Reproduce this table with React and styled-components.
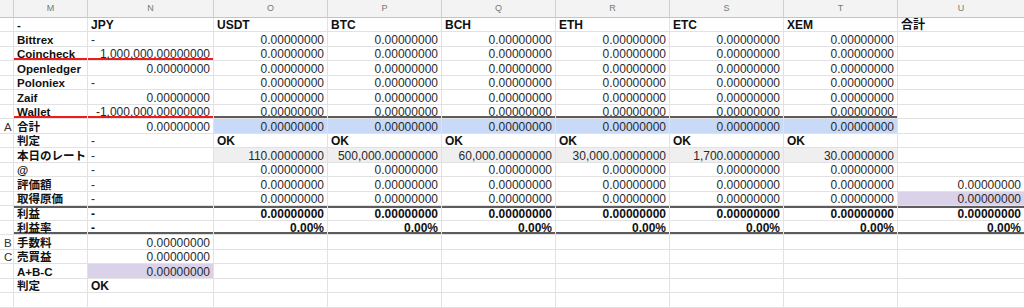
import React from "react";
import styled, { createGlobalStyle } from "styled-components";

const GlobalStyle = createGlobalStyle`
  html, body {
    margin: 0;
    padding: 0;
    background: #ffffff;
  }
  body {
    font-family: "Liberation Sans", Arial, "Noto Sans CJK JP", sans-serif;
  }
`;

const Viewport = styled.div`
  width: 1024px;
  height: 308px;
  overflow: hidden;
  background: #ffffff;
`;

const Sheet = styled.div`
  display: grid;
  grid-template-columns: 14px 74px 126px repeat(6, 114px) 127px;
  grid-template-rows: 17.5px;
  grid-auto-rows: 14.5px;
  width: 1025px;
`;

const HeaderCell = styled.div`
  box-sizing: border-box;
  background: #f3f3f3;
  border-right: 1px solid #d0d0d0;
  border-bottom: 1px solid #c4c4c4;
  color: #777;
  font-size: 9px;
  line-height: 16px;
  text-align: center;
`;

const Cell = styled.div`
  box-sizing: border-box;
  border-right: 1px solid #e2e2e2;
  border-bottom: 1px solid #e2e2e2;
  background: ${(p) => p.$bg || "#ffffff"};
  box-shadow: ${(p) =>
    [
      p.$top && `inset 0 2px 0 ${p.$top}`,
      p.$under && `inset 0 -2px 0 ${p.$under}`,
    ]
      .filter(Boolean)
      .join(", ") || "none"};
  padding: 1.5px 3px 0;
  font-size: ${(p) => (p.$label ? "11.5px" : "12px")};
  font-weight: ${(p) => (p.$bold ? 700 : 400)};
  color: ${(p) => (p.$bold ? "#111" : "#2a2a2a")};
  line-height: 13px;
  text-align: ${(p) => p.$align || "left"};
  white-space: nowrap;
`;

const Marker = styled(Cell)`
  padding-left: 4px;
  padding-right: 0;
  color: #333;
  font-size: 11.5px;
`;

const ZERO = "0.00000000";
const DARK = "#5c5c5c";
const RED = "#ee1c1c";
const BLUE = "#c9daf8";
const GREY = "#efefef";
const PURPLE = "#d9d2e9";

const letters = ["", "M", "N", "O", "P", "Q", "R", "S", "T", "U"];
const coins = ["USDT", "BTC", "BCH", "ETH", "ETC", "XEM"];
const rates = [
  "110.00000000",
  "500,000.00000000",
  "60,000.00000000",
  "30,000.00000000",
  "1,700.00000000",
  "30.00000000",
];

const num = (v, extra = {}) => ({ v, align: "right", ...extra });
const dash = (extra = {}) => ({ v: "-", ...extra });
const six = (fn) => coins.map((_, i) => fn(i));

const exchange = (name, jpy, under) => ({
  label: name,
  under,
  n: jpy === "-" ? dash() : num(jpy),
  coins: six(() => num(ZERO)),
  coinUnder: name === "Wallet" ? DARK : null,
});

const rows = [
  {
    label: "-",
    n: { v: "JPY", bold: true },
    coins: coins.map((c) => ({ v: c, bold: true })),
    u: { v: "合計", bold: true },
  },
  exchange("Bittrex", "-"),
  exchange("Coincheck", "1,000,000.00000000", RED),
  exchange("Openledger", ZERO),
  exchange("Poloniex", "-"),
  exchange("Zaif", ZERO),
  exchange("Wallet", "-1,000,000.00000000", RED),
  {
    marker: "A",
    label: "合計",
    n: num(ZERO),
    coins: six(() => num(ZERO, { bg: BLUE })),
  },
  {
    label: "判定",
    n: dash(),
    coins: six(() => ({ v: "OK", bold: true })),
  },
  {
    label: "本日のレート",
    n: dash(),
    coins: six((i) => num(rates[i], { bg: GREY })),
  },
  { label: "@", n: dash(), coins: six(() => num(ZERO)) },
  { label: "評価額", n: dash(), coins: six(() => num(ZERO)), u: num(ZERO) },
  {
    label: "取得原価",
    n: dash(),
    coins: six(() => num(ZERO)),
    u: num(ZERO, { bg: PURPLE }),
  },
  {
    label: "利益",
    top: DARK,
    n: dash({ bold: true }),
    coins: six(() => num(ZERO, { bold: true })),
    u: num(ZERO, { bold: true }),
  },
  {
    label: "利益率",
    bottom: DARK,
    n: dash({ bold: true }),
    coins: six(() => num("0.00%", { bold: true })),
    u: num("0.00%", { bold: true }),
  },
  { marker: "B", label: "手数料", n: num(ZERO) },
  { marker: "C", label: "売買益", n: num(ZERO) },
  { label: "A+B-C", n: num(ZERO, { bg: PURPLE }) },
  { label: "判定", n: { v: "OK", bold: true } },
  {},
  {},
];

const DataCell = ({ c, top, under }) => (
  <Cell
    $align={c && c.align}
    $bold={c && c.bold}
    $bg={c && c.bg}
    $top={top}
    $under={under}
  >
    {c ? c.v : ""}
  </Cell>
);

const SheetRow = ({ row }) => {
  const top = row.top;
  const under = row.bottom;
  return (
    <>
      <Marker>{row.marker || ""}</Marker>
      <Cell $bold $label $top={top} $under={row.under || under}>
        {row.label || ""}
      </Cell>
      <DataCell c={row.n} top={top} under={row.under || under} />
      {(row.coins || six(() => null)).map((c, i) => (
        <DataCell key={i} c={c} top={top} under={row.coinUnder || under} />
      ))}
      <DataCell c={row.u} top={top} under={under} />
    </>
  );
};

export default function App() {
  return (
    <Viewport>
      <GlobalStyle />
      <Sheet>
        {letters.map((l, i) => (
          <HeaderCell key={i}>{l}</HeaderCell>
        ))}
        {rows.map((row, i) => (
          <SheetRow key={i} row={row} />
        ))}
      </Sheet>
    </Viewport>
  );
}
